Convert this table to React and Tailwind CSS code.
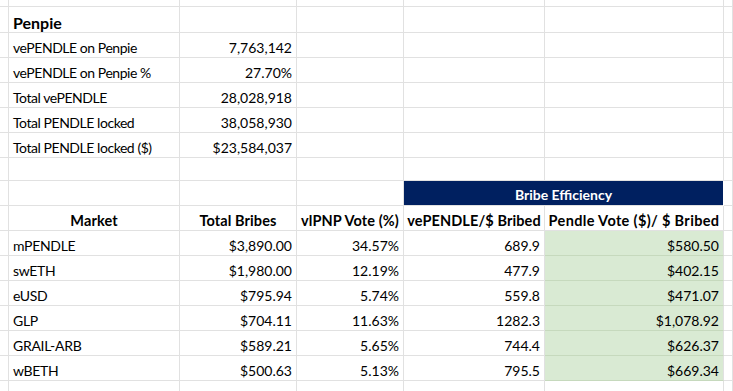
import React from "react";

const cols = "grid grid-cols-[9px_171px_117px_107px_141px_179px_1fr]";
const line = "border-r border-b border-[#e1e1e1]";

function Cell({ children, className = "", align = "left" }) {
  const a = align === "right" ? "justify-end pr-[4px]" : align === "center" ? "justify-center" : "justify-start pl-[4px]";
  return (
    <div className={`${line} flex items-end ${a} pb-[1px] overflow-hidden whitespace-nowrap ${className}`}>
      {children}
    </div>
  );
}

function Row({ h, children }) {
  return <div className={`${cols} ${h}`}>{children}</div>;
}

const summary = [
  ["vePENDLE on Penpie", "7,763,142"],
  ["vePENDLE on Penpie %", "27.70%"],
  ["Total vePENDLE", "28,028,918"],
  ["Total PENDLE locked", "38,058,930"],
  ["Total PENDLE locked ($)", "$23,584,037"],
];

const markets = [
  ["mPENDLE", "$3,890.00", "34.57%", "689.9", "$580.50"],
  ["swETH", "$1,980.00", "12.19%", "477.9", "$402.15"],
  ["eUSD", "$795.94", "5.74%", "559.8", "$471.07"],
  ["GLP", "$704.11", "11.63%", "1282.3", "$1,078.92"],
  ["GRAIL-ARB", "$589.21", "5.65%", "744.4", "$626.37"],
  ["wBETH", "$500.63", "5.13%", "795.5", "$669.34"],
];

const hdr = "font-bold text-[14.5px] tracking-[0.1px]";

export default function App() {
  return (
    <div className="w-[733px] h-[391px] overflow-hidden bg-white text-black text-[14px] leading-[17px]" style={{ fontFamily: "Lato, 'Open Sans', sans-serif" }}>
      <Row h="h-[7px]">
        <Cell /><Cell /><Cell /><Cell /><Cell /><Cell /><Cell />
      </Row>
      <Row h="h-[26px]">
        <Cell />
        <Cell className="font-bold text-[16px]">Penpie</Cell>
        <Cell /><Cell /><Cell /><Cell /><Cell />
      </Row>
      {summary.map(([k, v]) => (
        <Row key={k} h="h-[25px]">
          <Cell />
          <Cell className="tracking-[-0.45px]">{k}</Cell>
          <Cell align="right">{v}</Cell>
          <Cell /><Cell /><Cell /><Cell />
        </Row>
      ))}
      <Row h="h-[23px]">
        <Cell /><Cell /><Cell /><Cell /><Cell /><Cell /><Cell />
      </Row>
      <Row h="h-[25px]">
        <Cell /><Cell /><Cell /><Cell />
        <div className="col-span-2 bg-[#002060] border-b border-[#e1e1e1] mr-[1px] flex items-end justify-center pb-[2px] text-white font-bold text-[14px]">
          Bribe Efficiency
        </div>
        <Cell />
      </Row>
      <Row h="h-[25px]">
        <Cell />
        <Cell align="center" className={hdr}>Market</Cell>
        <Cell align="center" className={hdr}>Total Bribes</Cell>
        <Cell align="center" className={hdr}>vlPNP Vote (%)</Cell>
        <Cell align="center" className={hdr}>vePENDLE/$ Bribed</Cell>
        <Cell align="center" className="font-bold text-[14.5px] tracking-[0.35px]">Pendle Vote ($)/ $ Bribed</Cell>
        <Cell />
      </Row>
      {markets.map((m) => (
        <Row key={m[0]} h="h-[25px]">
          <Cell />
          <Cell className="tracking-[-0.3px]">{m[0]}</Cell>
          <Cell align="right">{m[1]}</Cell>
          <Cell align="right">{m[2]}</Cell>
          <Cell align="right">{m[3]}</Cell>
          <Cell align="right" className="bg-[#d9ead3] !border-b-[#c6d9bd]">{m[4]}</Cell>
          <Cell />
        </Row>
      ))}
      <Row h="h-[11px]">
        <Cell /><Cell /><Cell /><Cell /><Cell /><Cell /><Cell />
      </Row>
    </div>
  );
}
